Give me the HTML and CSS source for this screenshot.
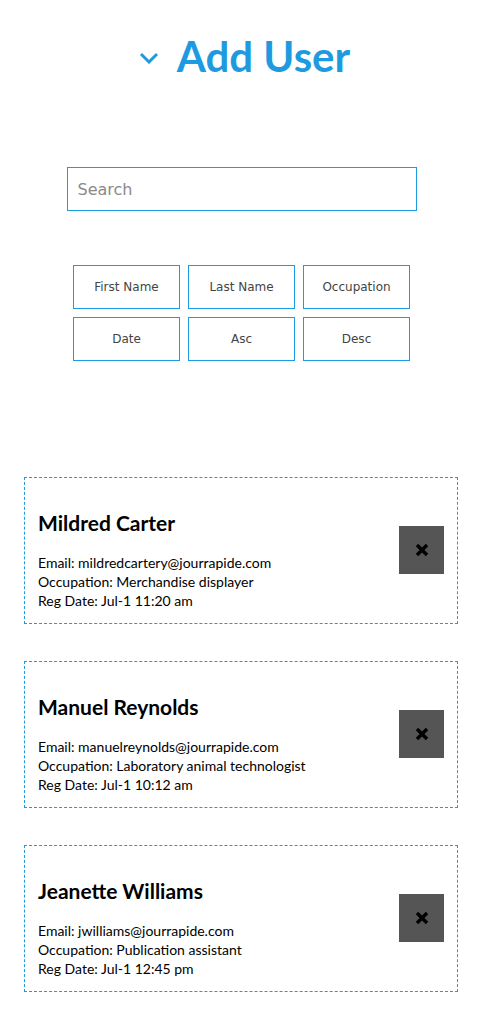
FILE: index.html
```html
<!DOCTYPE html>
<html>
<head>
<meta charset="utf-8">
<link rel="stylesheet" href="styles.css">
</head>
<body>
<header class="header">
  <svg class="chevron" width="20" height="12" viewBox="0 0 20 12"><path d="M2 2 L10 10 L18 2" fill="none" stroke="#1e9be0" stroke-width="3"/></svg>
  <h1 class="title">Add User</h1>
</header>
<div class="search-wrap">
  <input class="search" type="text" placeholder="Search">
</div>
<div class="sort-grid">
  <button class="sort-btn">First Name</button>
  <button class="sort-btn">Last Name</button>
  <button class="sort-btn">Occupation</button>
  <button class="sort-btn">Date</button>
  <button class="sort-btn">Asc</button>
  <button class="sort-btn">Desc</button>
</div>
<div class="list">
  <div class="card">
    <div class="info">
      <h2 class="name">Mildred Carter</h2>
      <p class="line">Email: mildredcartery@jourrapide.com</p>
      <p class="line">Occupation: Merchandise displayer</p>
      <p class="line">Reg Date: Jul-1 11:20 am</p>
    </div>
    <button class="del"><svg width="14" height="14" viewBox="0 0 14 14"><path d="M2 2 L12 12 M12 2 L2 12" stroke="#000" stroke-width="3.4"/></svg></button>
  </div>
  <div class="card">
    <div class="info">
      <h2 class="name">Manuel Reynolds</h2>
      <p class="line">Email: manuelreynolds@jourrapide.com</p>
      <p class="line">Occupation: Laboratory animal technologist</p>
      <p class="line">Reg Date: Jul-1 10:12 am</p>
    </div>
    <button class="del"><svg width="14" height="14" viewBox="0 0 14 14"><path d="M2 2 L12 12 M12 2 L2 12" stroke="#000" stroke-width="3.4"/></svg></button>
  </div>
  <div class="card">
    <div class="info">
      <h2 class="name">Jeanette Williams</h2>
      <p class="line">Email: jwilliams@jourrapide.com</p>
      <p class="line">Occupation: Publication assistant</p>
      <p class="line">Reg Date: Jul-1 12:45 pm</p>
    </div>
    <button class="del"><svg width="14" height="14" viewBox="0 0 14 14"><path d="M2 2 L12 12 M12 2 L2 12" stroke="#000" stroke-width="3.4"/></svg></button>
  </div>
</div>
</body>
</html>
```
FILE: styles.css
```css
* { box-sizing: border-box; }
body {
  margin: 0;
  background: #fff;
  font-family: "Lato", "Open Sans", sans-serif;
  color: #000;
}
.header {
  display: flex;
  justify-content: center;
  align-items: center;
  gap: 18px;
  height: 112px;
  padding-left: 7px;
}
.chevron { margin-top: 4px; }
.title {
  margin: 0;
  font-size: 42px;
  font-weight: 700;
  color: #1e9be0;
}
.search-wrap {
  display: flex;
  justify-content: center;
  padding-top: 55px;
  padding-left: 1px;
}
.search {
  width: 350px;
  height: 44px;
  border: 1px solid #1e9be0;
  padding: 0 10px;
  font-family: "DejaVu Sans", sans-serif;
  font-size: 16px;
  outline: none;
}
.search::placeholder { color: #8a8a8a; }
.sort-grid {
  display: grid;
  grid-template-columns: repeat(3, 107px);
  gap: 8px;
  justify-content: center;
  margin-top: 54px;
  padding-left: 1px;
}
.sort-btn {
  height: 44px;
  background: #fff;
  border: 1px solid #1e9be0;
  font-family: "DejaVu Sans", sans-serif;
  font-size: 12px;
  color: #444;
  padding: 0;
}
.list {
  display: flex;
  flex-direction: column;
  gap: 37px;
  padding: 116px 24px 0 24px;
}
.card {
  display: flex;
  align-items: center;
  justify-content: space-between;
  height: 147px;
  border: 1px dashed #1e9be0;
  padding: 18px 13px 0 13px;
}
.name {
  margin: 0 0 18px 0;
  font-size: 21px;
  font-weight: 700;
}
.line {
  margin: 0;
  font-size: 14px;
  line-height: 19px;
}
.del {
  width: 45px;
  height: 48px;
  background: #555;
  border: none;
  display: flex;
  align-items: center;
  justify-content: center;
  padding: 0;
  margin-top: -20px;
}
```
